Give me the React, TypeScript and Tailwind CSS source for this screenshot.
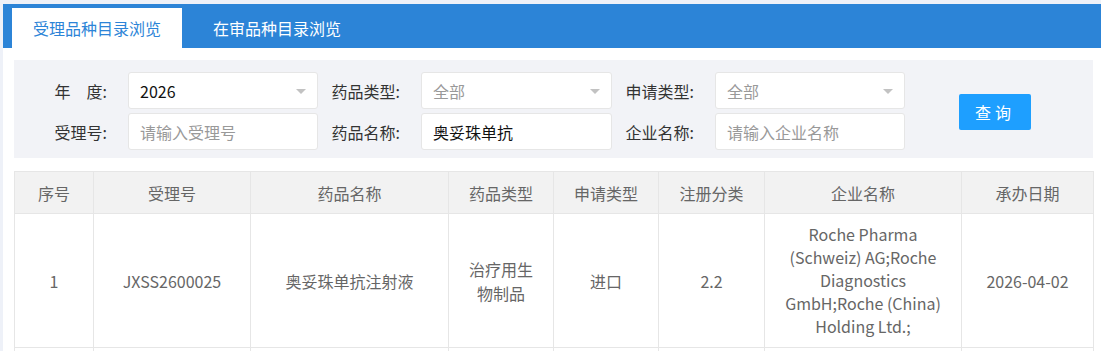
const FONT = "font-['Noto_Sans_CJK_SC','Noto_Sans',sans-serif]";

const COLS = [
  { key: "no", label: "序号", w: "w-[79px]" },
  { key: "code", label: "受理号", w: "w-[157px]" },
  { key: "name", label: "药品名称", w: "w-[198px]" },
  { key: "type", label: "药品类型", w: "w-[105px]" },
  { key: "apply", label: "申请类型", w: "w-[105px]" },
  { key: "reg", label: "注册分类", w: "w-[106px]" },
  { key: "corp", label: "企业名称", w: "w-[197px]" },
  { key: "date", label: "承办日期", w: "w-[132px]" },
];

function Caret() {
  return (
    <svg width="10" height="5" viewBox="0 0 10 5" className="absolute right-[11px] top-[16px]">
      <path d="M0 0h10L5 5z" fill="#c2c2c2" />
    </svg>
  );
}

function Label({ children }: { children: React.ReactNode }) {
  return (
    <div className="flex h-[37px] items-center justify-end pr-[21px] text-[16px] text-[#333]">
      {children}
    </div>
  );
}

function Field({
  value,
  placeholder,
  select,
  muted,
}: {
  value?: string;
  placeholder?: string;
  select?: boolean;
  muted?: boolean;
}) {
  return (
    <div className="relative flex h-[37px] items-center rounded-[3px] border border-[#e6e6e6] bg-white pl-[11px] text-[16px]">
      {value ? (
        <span className={muted ? "text-[#999]" : "text-[#111]"}>{value}</span>
      ) : (
        <span className="text-[#999]">{placeholder}</span>
      )}
      {select && <Caret />}
    </div>
  );
}

export default function App() {
  return (
    <div className={`h-[351px] overflow-hidden bg-[#eef1f8] pl-[3px] pt-[4px] ${FONT}`}>
      <div className="h-full bg-white">
        {/* tab bar */}
        <div className="flex h-[44px] items-end gap-[10px] bg-[#2c84d7] pl-[9px]">
          <div className="flex h-[40px] items-center bg-white px-[21px] text-[16px] text-[#2c84d7]">
            受理品种目录浏览
          </div>
          <div className="flex h-[40px] items-center px-[21px] text-[16px] text-white">
            在审品种目录浏览
          </div>
        </div>

        <div className="pl-[11px] pt-[12px]">
          {/* search panel */}
          <div className="flex w-[1079px] items-center bg-[#f2f3f7] pb-[8px] pl-[11px] pt-[12px]">
            <div className="grid grid-cols-[103px_190px_103px_191px_103px_190px] gap-y-[4px]">
              <Label>年&emsp;度:</Label>
              <Field value="2026" select />
              <Label>药品类型:</Label>
              <Field value="全部" select muted />
              <Label>申请类型:</Label>
              <Field value="全部" select muted />

              <Label>受理号:</Label>
              <Field placeholder="请输入受理号" />
              <Label>药品名称:</Label>
              <Field value="奥妥珠单抗" />
              <Label>企业名称:</Label>
              <Field placeholder="请输入企业名称" />
            </div>
            <button className="ml-[54px] mt-[2px] h-[36px] w-[72px] rounded-[2px] bg-[#1e9fff] text-[16px] tracking-[4px] text-white">
              查询
            </button>
          </div>

          {/* result table */}
          <table className="mt-[13px] w-[1079px] table-fixed border-collapse text-[16px] text-[#666]">
            <colgroup>
              {COLS.map((c) => (
                <col key={c.key} className={c.w} />
              ))}
            </colgroup>
            <thead>
              <tr className="h-[42px] bg-[#f2f2f2]">
                {COLS.map((c) => (
                  <th key={c.key} className="border border-[#e6e6e6] font-normal">
                    {c.label}
                  </th>
                ))}
              </tr>
            </thead>
            <tbody>
              <tr className="h-[134px] text-center">
                <td className="border border-[#e6e6e6]">1</td>
                <td className="border border-[#e6e6e6]">JXSS2600025</td>
                <td className="border border-[#e6e6e6]">奥妥珠单抗注射液</td>
                <td className="border border-[#e6e6e6] leading-[24px]">
                  治疗用生
                  <br />
                  物制品
                </td>
                <td className="border border-[#e6e6e6]">进口</td>
                <td className="border border-[#e6e6e6]">2.2</td>
                <td className="border border-[#e6e6e6] leading-[23px]">
                  Roche Pharma
                  <br />
                  (Schweiz) AG;Roche
                  <br />
                  Diagnostics
                  <br />
                  GmbH;Roche (China)
                  <br />
                  Holding Ltd.;
                </td>
                <td className="border border-[#e6e6e6]">2026-04-02</td>
              </tr>
              <tr className="h-[60px]">
                {COLS.map((c) => (
                  <td key={c.key} className="border border-[#e6e6e6]" />
                ))}
              </tr>
            </tbody>
          </table>
        </div>
      </div>
    </div>
  );
}
